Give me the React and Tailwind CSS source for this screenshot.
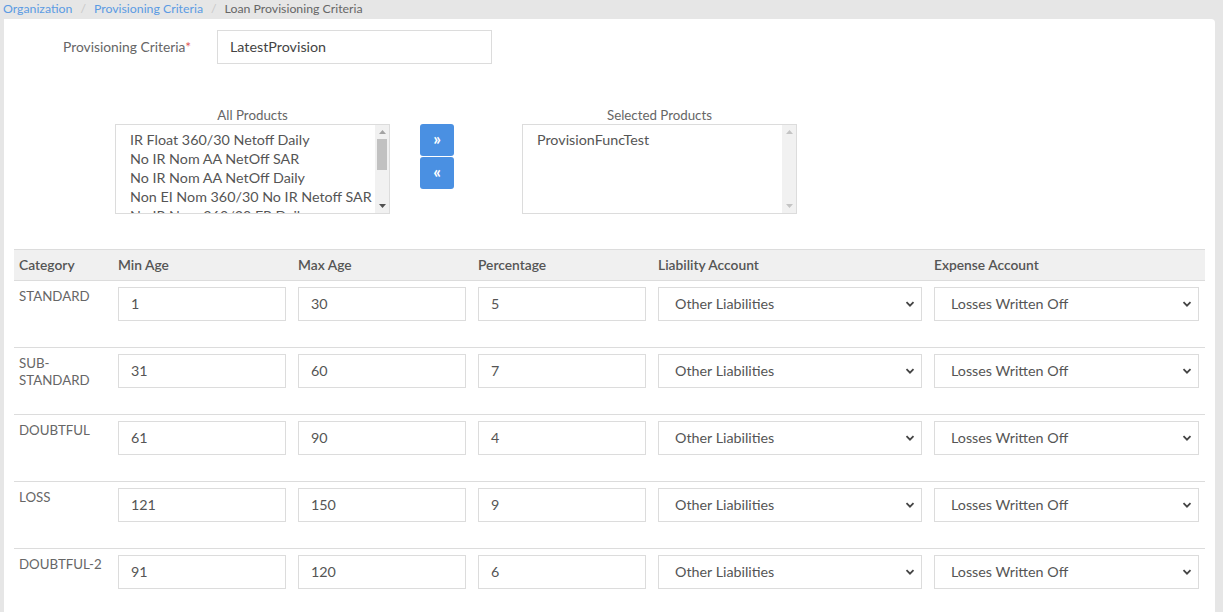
import React from "react";

const rows = [
  { cat: "STANDARD", min: "1", max: "30", pct: "5" },
  { cat: "SUB-STANDARD", min: "31", max: "60", pct: "7" },
  { cat: "DOUBTFUL", min: "61", max: "90", pct: "4" },
  { cat: "LOSS", min: "121", max: "150", pct: "9" },
  { cat: "DOUBTFUL-2", min: "91", max: "120", pct: "6" },
];

const allProducts = [
  "IR Float 360/30 Netoff Daily",
  "No IR Nom AA NetOff SAR",
  "No IR Nom AA NetOff Daily",
  "Non EI Nom 360/30 No IR Netoff SAR",
  "No IR Nom 360/30 FR Daily",
];

const grid = "grid grid-cols-[98px_180px_180px_180px_276px_277px]";

function Chevron() {
  return (
    <svg width="10" height="10" viewBox="0 0 10 10" className="shrink-0">
      <path d="M1.5 3.2 L5 6.7 L8.5 3.2" fill="none" stroke="#444" strokeWidth="1.8" />
    </svg>
  );
}

function Scrollbar({ thumb }) {
  return (
    <div className="flex w-[14px] shrink-0 flex-col items-center bg-[#f1f1f1]">
      <div className="flex h-[14px] items-center justify-center">
        <svg width="7" height="4" viewBox="0 0 7 4">
          <path d="M0 4 L3.5 0 L7 4 Z" fill={thumb ? "#a3a3a3" : "#c4c4c4"} />
        </svg>
      </div>
      <div className="w-full flex-1 px-[2px]">
        {thumb ? <div className="h-[31px] w-full bg-[#c1c1c1]" /> : null}
      </div>
      <div className="flex h-[14px] items-center justify-center">
        <svg width="7" height="4" viewBox="0 0 7 4">
          <path d="M0 0 L3.5 4 L7 0 Z" fill={thumb ? "#505050" : "#c4c4c4"} />
        </svg>
      </div>
    </div>
  );
}

function ListBox({ items, thumb }) {
  return (
    <div className="flex h-[90px] w-[275px] overflow-hidden border border-[#dcdcdc] bg-white">
      <div className="flex-1 overflow-hidden pl-[14px] pt-[5px] text-[14.3px] leading-[19px] text-[#555]">
        {items.map((p) => (
          <div key={p} className="whitespace-nowrap">
            {p}
          </div>
        ))}
      </div>
      <Scrollbar thumb={thumb} />
    </div>
  );
}

function Field({ value }) {
  return (
    <div className="flex h-[34px] items-center border border-[#dcdcdc] bg-white px-[12px] text-[14.3px] text-[#555]">
      {value}
    </div>
  );
}

function SelectBox({ value }) {
  return (
    <div className="flex h-[34px] items-center justify-between border border-[#dcdcdc] bg-white pl-[16px] pr-[6px] text-[14.3px] text-[#555]">
      <span>{value}</span>
      <Chevron />
    </div>
  );
}

export default function App() {
  return (
    <div
      className="h-[612px] w-[1223px] overflow-hidden bg-[#e6e6e6]"
      style={{ fontFamily: "Lato, 'Open Sans', sans-serif" }}
    >
      <div className="flex h-[19px] items-start gap-[8px] pl-[3px] pt-[2px] text-[12.3px] leading-[13px]">
        <span className="text-[#5b9be3]">Organization</span>
        <span className="text-[#c8c8c8]">/</span>
        <span className="text-[#5b9be3]">Provisioning Criteria</span>
        <span className="text-[#c8c8c8]">/</span>
        <span className="text-[#666]">Loan Provisioning Criteria</span>
      </div>

      <div className="ml-[4px] h-[600px] w-[1211px] rounded-tr-[4px] bg-white pl-[10px] pt-[11px]">
        <div className="flex items-center">
          <div className="w-[177px] text-right text-[13.8px] text-[#666]">
            Provisioning Criteria<span className="text-[#e05555]">*</span>
          </div>
          <div className="ml-[26px] flex h-[34px] w-[275px] items-center border border-[#dcdcdc] px-[12px] text-[14.3px] text-[#444]">
            LatestProvision
          </div>
        </div>

        <div className="mt-[41px] flex items-start">
          <div className="ml-[101px] flex flex-col items-center">
            <div className="pt-[2px] text-[13.3px] leading-[17px] text-[#666]">All Products</div>
            <ListBox items={allProducts} thumb />
          </div>
          <div className="ml-[30px] mt-[19px] flex flex-col gap-[1px]">
            <div className="flex h-[32px] w-[34px] items-center justify-center rounded-[3px] bg-[#4a90e2] pb-[2px] text-[17px] font-bold text-white">
              »
            </div>
            <div className="flex h-[32px] w-[34px] items-center justify-center rounded-[3px] bg-[#4a90e2] pb-[2px] text-[17px] font-bold text-white">
              «
            </div>
          </div>
          <div className="ml-[68px] flex flex-col items-center">
            <div className="pt-[2px] text-[13.3px] leading-[17px] text-[#666]">Selected Products</div>
            <ListBox items={["ProvisionFuncTest"]} />
          </div>
        </div>

        <div className="mt-[35px] w-[1191px]">
          <div
            className={`${grid} h-[32px] items-center border-y border-[#dcdcdc] bg-[#f0f0f0] text-[13.8px] font-semibold text-[#555]`}
          >
            <div className="pl-[5px]">Category</div>
            <div className="pl-[6px]">Min Age</div>
            <div className="pl-[6px]">Max Age</div>
            <div className="pl-[6px]">Percentage</div>
            <div className="pl-[6px]">Liability Account</div>
            <div className="pl-[6px]">Expense Account</div>
          </div>
          {rows.map((r, i) => (
            <div
              key={r.cat}
              className={`${grid} h-[67px] items-start ${i < rows.length - 1 ? "border-b border-[#dcdcdc]" : ""}`}
            >
              <div className="w-[92px] pl-[5px] pt-[7px] text-[13.3px] leading-[17px] text-[#666]">
                {r.cat}
              </div>
              <div className="px-[6px] pt-[6px]">
                <Field value={r.min} />
              </div>
              <div className="px-[6px] pt-[6px]">
                <Field value={r.max} />
              </div>
              <div className="px-[6px] pt-[6px]">
                <Field value={r.pct} />
              </div>
              <div className="px-[6px] pt-[6px]">
                <SelectBox value="Other Liabilities" />
              </div>
              <div className="px-[6px] pt-[6px]">
                <SelectBox value="Losses Written Off" />
              </div>
            </div>
          ))}
        </div>
      </div>
    </div>
  );
}
